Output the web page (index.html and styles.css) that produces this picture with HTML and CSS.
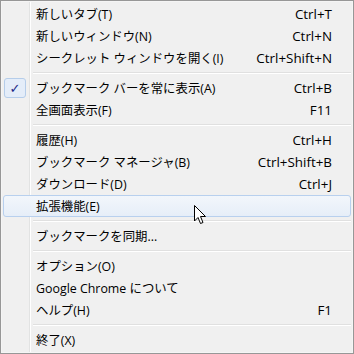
FILE: index.html
```html
<!DOCTYPE html>
<html lang="ja">
<head>
  <meta charset="UTF-8">
  <title>Chrome Menu</title>
  <link rel="stylesheet" href="styles.css">
</head>
<body>
  <div class="menu">
    <div class="item"><span class="gutter"></span><span class="label">新しいタブ(T)</span><span class="key">Ctrl+T</span></div>
    <div class="item"><span class="gutter"></span><span class="label">新しいウィンドウ(N)</span><span class="key">Ctrl+N</span></div>
    <div class="item"><span class="gutter"></span><span class="label">シークレット ウィンドウを開く(I)</span><span class="key">Ctrl+Shift+N</span></div>
    <div class="sep"></div>
    <div class="item"><span class="gutter"><span class="check">&#10003;</span></span><span class="label">ブックマーク バーを常に表示(A)</span><span class="key">Ctrl+B</span></div>
    <div class="item"><span class="gutter"></span><span class="label">全画面表示(F)</span><span class="key">F11</span></div>
    <div class="sep"></div>
    <div class="item"><span class="gutter"></span><span class="label">履歴(H)</span><span class="key">Ctrl+H</span></div>
    <div class="item"><span class="gutter"></span><span class="label">ブックマーク マネージャ(B)</span><span class="key">Ctrl+Shift+B</span></div>
    <div class="item"><span class="gutter"></span><span class="label">ダウンロード(D)</span><span class="key">Ctrl+J</span></div>
    <div class="item hover"><span class="gutter"></span><span class="label">拡張機能(E)</span><span class="key"></span>
      <svg class="cursor" width="13" height="20" viewBox="0 0 13 20">
        <path d="M0.5 0.5 L0.5 16 L4 12.5 L6.5 18.5 L9 17.5 L6.5 11.5 L11.5 11.5 Z" fill="#fff" stroke="#000" stroke-width="1"/>
      </svg>
    </div>
    <div class="sep"></div>
    <div class="item"><span class="gutter"></span><span class="label">ブックマークを同期...</span><span class="key"></span></div>
    <div class="sep"></div>
    <div class="item"><span class="gutter"></span><span class="label">オプション(O)</span><span class="key"></span></div>
    <div class="item"><span class="gutter"></span><span class="label">Google Chrome について</span><span class="key"></span></div>
    <div class="item"><span class="gutter"></span><span class="label">ヘルプ(H)</span><span class="key">F1</span></div>
    <div class="sep"></div>
    <div class="item"><span class="gutter"></span><span class="label">終了(X)</span><span class="key"></span></div>
  </div>
</body>
</html>
```

FILE: styles.css
```css
body { margin: 0; font-family: "Open Sans", "Noto Sans CJK JP", sans-serif; font-size: 12.4px; color: #000; }
.menu {
  width: 354px; height: 354px; box-sizing: border-box;
  border: 1px solid #979797; padding: 2px;
  background: linear-gradient(to right, transparent 28px, #e2e3e3 28px, #e2e3e3 29px, #fff 29px, #fff 30px, transparent 30px) no-repeat, #f0f0f0;
  box-shadow: inset 0 0 0 1px #f5f5f5;
}
.item {
  position: relative;
  display: grid; grid-template-columns: 32px 1fr auto;
  align-items: center; height: 22px; box-sizing: border-box;
  padding-right: 18px; border: 1px solid transparent; border-radius: 3px;
}
.item.hover {
  border-color: #b8d0ee;
  background: linear-gradient(#f2f6fb, #e6eef8);
}
.gutter { height: 100%; display: flex; align-items: center; }
.check {
  width: 22px; height: 20px; box-sizing: border-box;
  border: 1px solid #b5cdea; border-radius: 3px;
  background: #e4edf9; color: #1b2a87;
  display: flex; align-items: center; justify-content: center;
  font-family: "DejaVu Sans", sans-serif; font-size: 13px; font-weight: bold;
}
.label { white-space: nowrap; }
.key { white-space: nowrap; text-align: right; font-size: 13.4px; }
.sep {
  height: 8px; margin-left: 30px;
  background: linear-gradient(transparent 3px, #e0e0e0 3px, #e0e0e0 4px, #fff 4px, #fff 5px, transparent 5px);
}
.cursor { position: absolute; left: 190px; top: 9px; }
```
